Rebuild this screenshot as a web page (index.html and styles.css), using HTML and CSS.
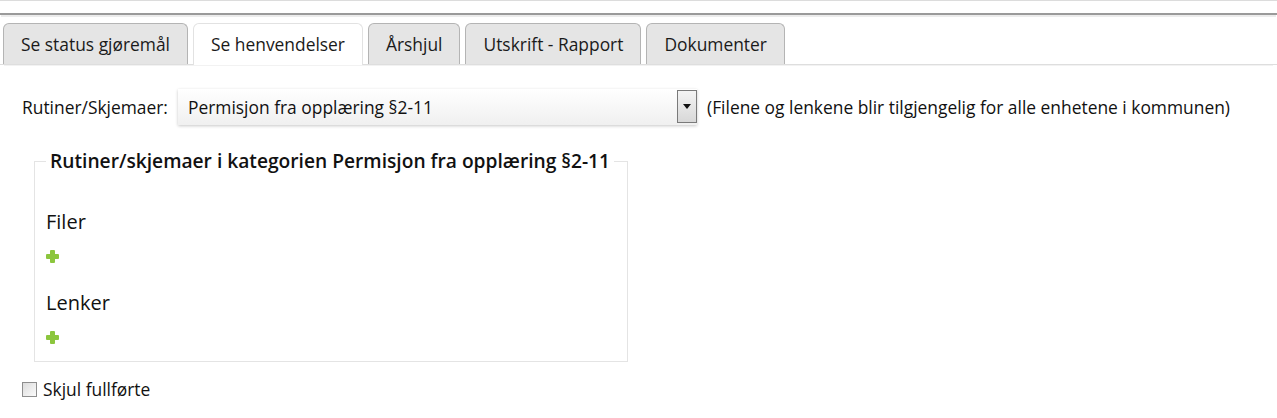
FILE: index.html
```html
<!DOCTYPE html>
<html lang="no">
<head>
<meta charset="utf-8">
<title>Se henvendelser</title>
<link rel="stylesheet" href="styles.css">
</head>
<body>
<div class="topbar"></div>
<div class="tabs">
  <div class="tab">Se status gjøremål</div>
  <div class="tab active">Se henvendelser</div>
  <div class="tab">Årshjul</div>
  <div class="tab">Utskrift - Rapport</div>
  <div class="tab">Dokumenter</div>
</div>
<div class="content">
  <div class="row">
    <span class="label">Rutiner/Skjemaer:</span>
    <div class="select">
      <span class="select-text">Permisjon fra opplæring §2-11</span>
      <span class="select-btn"><span class="arrow"></span></span>
    </div>
    <span class="note">(Filene og lenkene blir tilgjengelig for alle enhetene i kommunen)</span>
  </div>
  <fieldset class="box">
    <legend>Rutiner/skjemaer i kategorien Permisjon fra opplæring §2-11</legend>
    <h3 class="section">Filer</h3>
    <span class="plus"></span>
    <h3 class="section">Lenker</h3>
    <span class="plus"></span>
  </fieldset>
  <label class="check"><span class="box-check"></span>Skjul fullførte</label>
</div>
</body>
</html>
```

FILE: styles.css
```css
html, body {
  margin: 0;
  padding: 0;
  background: #fff;
  font-family: "Open Sans", "Noto Sans", sans-serif;
  color: #111;
}
.topbar {
  height: 12px;
  border-top: 1px solid #dcdcdc;
  border-bottom: 2px solid #9a9a9a;
  box-shadow: 0 3px 0 -1px #ececec;
}
.tabs {
  display: flex;
  gap: 5px;
  padding: 8px 0 0 3px;
  height: 41px;
  border-bottom: 1px solid #dedede;
  box-shadow: 0 5px 0 -4px #f2f2f2;
}
.tab {
  box-sizing: border-box;
  height: 41px;
  padding: 0 17px;
  line-height: 41px;
  font-size: 17.4px;
  color: #1a1a1a;
  background: #e5e5e5;
  border: 1px solid #b4b4b4;
  border-bottom: none;
  border-radius: 6px 6px 0 0;
}
.tab.active {
  background: #fff;
  border-color: #e2e2e2;
  position: relative;
  z-index: 1;
  height: 42px;
}
.content {
  padding: 23px 0 0 22px;
}
.row {
  display: flex;
  align-items: center;
  height: 37px;
  font-size: 17.4px;
}
.label {
  width: 156px;
}
.select {
  display: flex;
  align-items: center;
  width: 519px;
  height: 36px;
  box-sizing: border-box;
  padding-left: 10px;
  background: linear-gradient(#ffffff, #f0f0f0);
  box-shadow: 0 1px 3px rgba(0,0,0,0.22);
}
.select-text {
  flex: 1;
}
.select-btn {
  width: 20px;
  height: 33px;
  box-sizing: border-box;
  border: 1px solid #7a7a7a;
  background: linear-gradient(#f4f4f4, #d8d8d8);
  display: flex;
  align-items: center;
  justify-content: center;
}
.arrow {
  width: 0;
  height: 0;
  border-left: 4px solid transparent;
  border-right: 4px solid transparent;
  border-top: 5px solid #111;
}
.note {
  margin-left: 10px;
}
.box {
  width: 594px;
  box-sizing: border-box;
  margin: 23px 0 0 12px;
  padding: 35px 11px 17px;
  border: 1px solid #e4e4e4;
}
.box legend {
  padding: 0 4px;
  margin-left: 0;
  font-size: 19.2px;
  line-height: 26px;
  font-weight: 600;
  color: #111;
}
.section {
  margin: 0;
  font-size: 20px;
  font-weight: 400;
  line-height: 26px;
}
.plus {
  display: block;
  position: relative;
  width: 13px;
  height: 13px;
  margin: 15px 0 27px;
}
.plus::before, .plus::after {
  content: "";
  position: absolute;
  background: #8cc63e;
  border-radius: 1px;
}
.plus::before {
  left: 4px;
  top: 0;
  width: 5px;
  height: 13px;
}
.plus::after {
  left: 0;
  top: 4px;
  width: 13px;
  height: 5px;
}
.box .plus:last-child {
  margin-bottom: 0;
}
.check {
  display: flex;
  align-items: center;
  margin-top: 15px;
  font-size: 17.4px;
  line-height: 24px;
}
.box-check {
  width: 13px;
  height: 13px;
  border: 1px solid #8e8e8e;
  background: linear-gradient(135deg, #dcdcdc, #fbfbfb);
  margin-right: 6px;
}
```
